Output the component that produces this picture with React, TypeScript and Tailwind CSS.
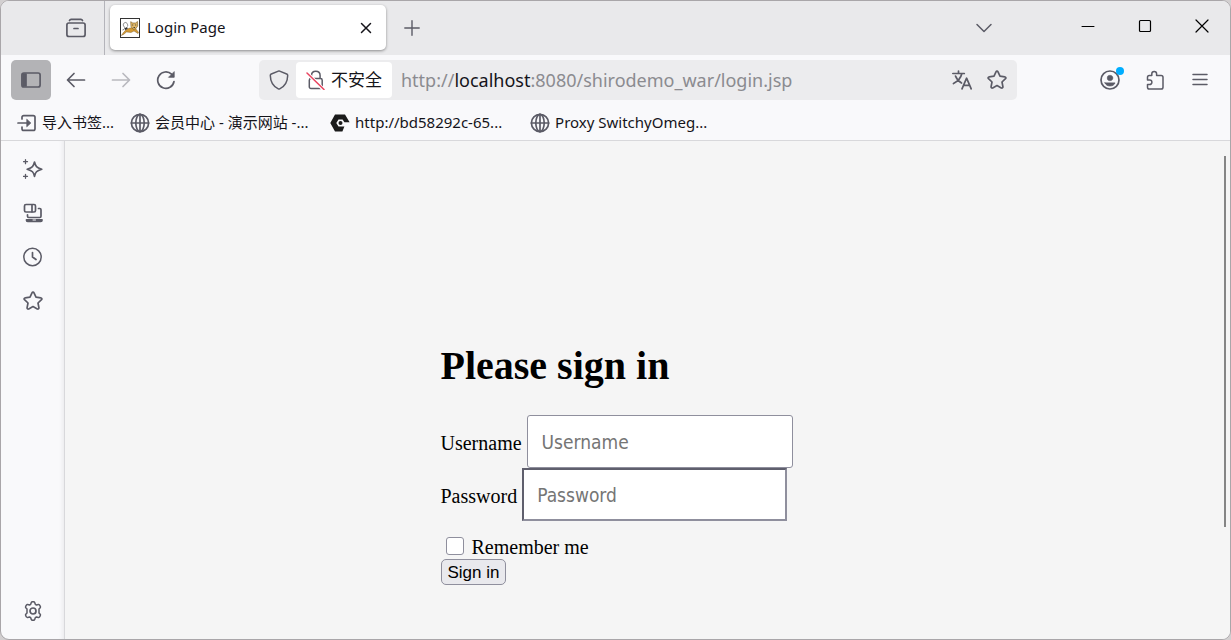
import type { ReactNode } from "react";

type IconProps = { children: ReactNode; color?: string };

function Icon({ children, color = "text-[#5b5b66]" }: IconProps) {
  return (
    <svg
      viewBox="0 0 20 20"
      fill="none"
      stroke="currentColor"
      strokeWidth="1.700"
      strokeLinecap="round"
      strokeLinejoin="round"
      aria-hidden="true"
      className={`size-5 shrink-0 ${color}`}
    >
      {children}
    </svg>
  );
}

const STAR =
  "M10 1.2c.5 0 .8.3 1 .7l2 4.3 4.800.6c1 .1 1.400 1.200.7 1.900l-3.500 3.300.9 4.700c.2 1-.8 1.700-1.600 1.200L10 15.600l-4.300 2.300c-.8.5-1.800-.2-1.600-1.200l.9-4.700L1.500 8.700c-.7-.7-.3-1.800.7-1.900L7 6.200l2-4.300c.2-.4.5-.7 1-.7Z";

function Globe() {
  return (
    <Icon>
      <circle cx="10" cy="10" r="8.600" />
      <ellipse cx="10" cy="10" rx="4.200" ry="8.600" />
      <path d="M1.400 10h17.200M10 1.400v17.200" />
    </Icon>
  );
}

function Star() {
  return (
    <Icon>
      <path d={STAR} />
    </Icon>
  );
}

function CatIcon() {
  return (
    <svg viewBox="0 0 20 20" className="size-5 shrink-0" aria-hidden="true">
      <rect x=".5" y=".5" width="19" height="19" fill="#fff" stroke="#333" />
      <path d="M6.500 4.500C4 4 2.300 6.500 4 8.500c1.500 1.600 1 3-1.500 3.500M6.500 5c1 1 1.500 2 1 3.500" fill="none" stroke="#666" strokeWidth=".8" />
      <path d="M1.300 17.500c1.700-2.500 3.200-5 6.200-6.500 2.500-1.300 5-1.500 8-.5l3.200 4-.7 1-4-2.500-3 1.500-4.500-.5-3 2.500Z" fill="#d39a35" stroke="#6b4d1d" strokeWidth=".4" />
      <path d="M10.700 3.700 12.800 5h2.700l2-1.500.2 4.500-2.200 3-2.500.2-2-2.700Z" fill="#e0b869" stroke="#76571f" strokeWidth=".6" />
      <path d="M12.200 7h1M15.200 7h1M13.500 9.500h1.500" stroke="#333" strokeWidth=".9" />
      <path d="M4.500 10.500 7 9l.8 1.500-2.300 1.700Z" fill="#333" />
    </svg>
  );
}

type BookmarkProps = { icon: ReactNode; label: string; width?: string };

function Bookmark({ icon, label, width = "min-w-[184px]" }: BookmarkProps) {
  return (
    <a href="#" className={`flex items-center gap-[5px] whitespace-nowrap ${width}`}>
      {icon}
      <span>{label}</span>
    </a>
  );
}

function TabStrip() {
  return (
    <div className="flex h-[54px] items-stretch bg-[#e9e9eb] pr-3">
      <div className="flex w-[104px] items-center justify-end border-r border-[#b4b4ba] pr-[18px]">
        <button aria-label="Recent tabs">
          <Icon>
            <rect x="0.900" y="5" width="18.200" height="13.500" rx="2" />
            <path d="M3.500 2.500c.3-.8.800-1.200 1.600-1.200h9.800c.8 0 1.300.4 1.600 1.200M8 10.500h4" />
          </Icon>
        </button>
      </div>
      <div className="mt-1 mb-[5px] ml-[5px] flex w-[276px] items-center rounded-[5px] bg-white px-[10px] text-[15px] text-[#15141a] shadow-[0_1px_3px_rgba(0,0,0,0.4)]">
        <CatIcon />
        <span className="ml-[7px] flex-1">Login Page</span>
        <button aria-label="Close tab">
          <Icon color="text-[#15141a]">
            <path d="m5.500 5.500 9 9m0-9-9 9" strokeWidth="1.500" />
          </Icon>
        </button>
      </div>
      <button aria-label="New tab" className="ml-4">
        <Icon>
          <path d="M10 2.800v14.400M2.800 10h14.400" strokeWidth="1.400" />
        </Icon>
      </button>
      <div className="ml-auto flex items-center">
        <button aria-label="List all tabs" className="mr-[84px]">
          <Icon>
            <path d="m3 6.500 7 7 7-7" strokeWidth="1.500" />
          </Icon>
        </button>
        <div className="flex gap-[37px] pb-1">
          <button aria-label="Minimize">
            <Icon color="text-black">
              <path d="M4 10.500h12" strokeWidth="1" />
            </Icon>
          </button>
          <button aria-label="Maximize">
            <Icon color="text-black">
              <rect x="4.500" y="4.500" width="11" height="11" rx="1" strokeWidth="1.200" />
            </Icon>
          </button>
          <button aria-label="Close window" className="mr-[6px]">
            <Icon color="text-black">
              <path d="m4 4 12 12M16 4 4 16" strokeWidth="1.200" />
            </Icon>
          </button>
        </div>
      </div>
    </div>
  );
}

function Toolbar() {
  return (
    <div className="flex h-[50px] items-center px-[10px]">
      <button aria-label="Toggle sidebar" className="flex size-10 shrink-0 items-center justify-center rounded-[5px] bg-[#b3b3b6]">
        <Icon>
          <rect x=".9" y="3" width="18.200" height="14" rx="2" />
          <path d="M2 4h3v12H2Z" fill="currentColor" />
        </Icon>
      </button>
      <div className="ml-[15px] flex gap-[25px]">
        <button aria-label="Back">
          <Icon>
            <path d="M18.500 10H1.800M8 3.500 1.500 10 8 16.500" />
          </Icon>
        </button>
        <button aria-label="Forward" disabled>
          <Icon color="text-[#b9b9bf]">
            <path d="M1.500 10h16.700M12 3.500l6.500 6.500-6.500 6.500" />
          </Icon>
        </button>
        <button aria-label="Reload">
          <Icon>
            <path d="M18 11.500A8.200 8.200 0 1 1 15.600 4.200" />
            <path d="M18.200 2v5.300h-5.300Z" fill="currentColor" strokeWidth=".8" />
          </Icon>
        </button>
      </div>
      <div className="ml-[83px] flex h-10 w-[758px] min-w-0 items-center rounded-[5px] bg-[#ececee] px-[10px]">
        <button aria-label="Tracking protection">
          <Icon>
            <path d="M10 .9 17.700 4c.7.300 1 .7 1 1.400-.1 6-2.800 10.800-8 13.500-.5.200-.9.200-1.400 0-5.200-2.700-7.900-7.500-8-13.500 0-.7.300-1.100 1-1.400Z" strokeWidth="1.500" />
          </Icon>
        </button>
        <button className="ml-[7px] flex h-9 items-center gap-[5px] rounded-[4px] bg-white px-[10px] text-[17px] whitespace-nowrap text-[#15141a]">
          <Icon>
            <path d="M5.500 8.500h9c1 0 1.700.7 1.700 1.700v6.600c0 1-.7 1.700-1.700 1.700h-9.500c-1 0-1.700-.7-1.700-1.700v-6.600c0-1 .7-1.700 1.700-1.700M5.500 8V5.500C5.500 3 7.300 1.200 9.800 1.200S14.100 3 14.100 5.500V8" strokeWidth="1.500" />
            <path d="m1.500 3.500 16 16" stroke="#fff" strokeWidth="3.500" />
            <path d="m1 3 17 16.500" stroke="#e94560" strokeWidth="1.500" />
          </Icon>
          不安全
        </button>
        <div className="ml-[9px] flex-1 truncate text-[18px] text-[#8b8b90]">
          http://<span className="text-[#15141a]">localhost</span>:8080/shirodemo_war/login.jsp
        </div>
        <button aria-label="Translate page">
          <Icon>
            <path d="M.8 3.500h11.500M6.500 1v2.500M9.800 3.800C8.800 8 5.500 11.500 1.500 13.500M3.500 6c1 3 3 5.300 6 7M10 18.800l4.600-10.600 4.600 10.600M11.500 15.400h6.200" />
          </Icon>
        </button>
        <button aria-label="Bookmark this page" className="ml-[15px]">
          <Star />
        </button>
      </div>
      <div className="ml-auto flex items-center gap-[25px] pr-[10px]">
        <button aria-label="Account" className="relative">
          <Icon>
            <circle cx="10" cy="10" r="9" />
            <circle cx="10" cy="8" r="2.800" fill="currentColor" strokeWidth=".5" />
            <path d="M5 12.900h10c-.8 2-2.500 3-5 3s-4.200-1-5-3Z" fill="currentColor" strokeWidth=".8" />
          </Icon>
          <span className="absolute -top-[3px] -right-1 size-2 rounded-full bg-[#00aeff]" />
        </button>
        <button aria-label="Extensions">
          <Icon>
            <path
              d="M4.300 5.500h2.500V3.800a2.300 2.300 0 0 1 4.800 0v1.700h4.600c1.100 0 1.800.7 1.800 1.800v10c0 1.100-.7 1.800-1.800 1.800H4.300c-1.100 0-1.800-.7-1.800-1.800v-2.800h2.200a2.200 2.200 0 0 0 0-4.400H2.500V7.300c0-1.100.7-1.800 1.800-1.800Z"
              strokeWidth="1.500"
            />
          </Icon>
        </button>
        <button aria-label="Menu">
          <Icon>
            <path d="M3 4.500h14M3 9.500h14M3 14.500h14" strokeWidth="1.500" />
          </Icon>
        </button>
      </div>
    </div>
  );
}

function BookmarksBar() {
  return (
    <nav aria-label="Bookmarks" className="flex h-9 items-center gap-4 border-b border-[#d8d8db] px-4 text-[15px] text-[#15141a]">
      <Bookmark
        label="导入书签..."
        width="min-w-0"
        icon={
          <Icon>
            <path d="M5 6V4.300c0-1 .7-1.700 1.700-1.700h9.600c1 0 1.700.7 1.700 1.700v11.400c0 1-.7 1.700-1.700 1.700H6.700c-1 0-1.700-.7-1.700-1.700V14M1 10h10" />
            <path d="m10 6.500 3.800 3.500-3.800 3.500Z" fill="currentColor" strokeWidth=".8" />
          </Icon>
        }
      />
      <Bookmark label="会员中心 - 演示网站 -..." icon={<Globe />} />
      <Bookmark
        label="http://bd58292c-65..."
        icon={
          <svg viewBox="0 0 20 20" className="size-5 shrink-0" aria-hidden="true">
            <path d="M5 1.500h10l4.600 7.800h-5.200L12.600 6.400H8.500L6.300 10l2.200 3.600h5.900L12.400 18.500H5L.3 10Z" fill="#1b1b1b" />
            <circle cx="10.500" cy="10" r="2" fill="#1b1b1b" />
          </svg>
        }
      />
      <Bookmark label="Proxy SwitchyOmeg..." icon={<Globe />} />
    </nav>
  );
}

function Sidebar() {
  return (
    <aside className="flex w-16 shrink-0 flex-col items-center gap-6 border-r border-[#d8d8db] py-[18px] shadow-[inset_-5px_0_5px_-4px_rgba(0,0,0,0.07)]">
      <button aria-label="AI chatbot">
        <Icon>
          <path d="M11.500 3c1 4.500 2 5.500 7.300 7.200-5.300 1.700-6.300 2.700-7.300 7.200-1-4.500-2-5.500-7.300-7.200 5.300-1.700 6.300-2.700 7.300-7.200Z" />
          <path d="M2.500.7v4M.5 2.700h4M2.500 15.300v4M.5 17.300h4" strokeWidth="1.300" />
        </Icon>
      </button>
      <button aria-label="Synced tabs">
        <Icon>
          <rect x="1.500" y="1.500" width="11" height="7.500" rx="1.500" />
          <path d="M9 1.800v7M15.500 5.500h1.300c.7 0 1.200.5 1.200 1.200v6.600c0 .7-.5 1.200-1.200 1.200H5.700c-.7 0-1.200-.5-1.200-1.200v-1.500" />
          <path d="M3.500 16.800H19v.5c0 .7-.5 1.200-1.200 1.200H4.700c-.7 0-1.200-.5-1.200-1.200Z" fill="currentColor" />
          <path d="M10 17h2.500" stroke="#f9f9fb" strokeWidth="1" />
        </Icon>
      </button>
      <button aria-label="History">
        <Icon>
          <circle cx="9.500" cy="10" r="8.700" strokeWidth="1.500" />
          <path d="M9.500 5.500V10l3.500 2.500" />
        </Icon>
      </button>
      <button aria-label="Bookmarks sidebar">
        <Star />
      </button>
      <button aria-label="Customize sidebar" className="mt-auto">
        <Icon>
          <path
            d="M8.300 1.600c.2-.5.600-.8 1.100-.8h1.200c.5 0 .9.300 1.100.8l.6 1.700 1.200.7 1.800-.4c.5-.1 1 .1 1.300.5l.7 1.200c.3.500.2 1-.1 1.400L16 8v4l1.200 1.300c.3.400.4.900.1 1.400l-.7 1.200c-.3.400-.8.600-1.300.5l-1.800-.4-1.200.7-.6 1.700c-.2.500-.6.800-1.100.8H9.400c-.5 0-.9-.3-1.100-.8l-.6-1.700-1.200-.7-1.800.4c-.5.100-1-.1-1.300-.5l-.7-1.200c-.3-.5-.2-1 .1-1.400L4 12V8L2.800 6.700c-.3-.4-.4-.9-.1-1.400l.7-1.200c.3-.4.8-.6 1.300-.5l1.800.4 1.200-.7Z"
            strokeWidth="1.500"
          />
          <circle cx="10" cy="10" r="3" />
        </Icon>
      </button>
    </aside>
  );
}

function LoginPage() {
  return (
    <main className="flex flex-1 bg-[#f5f5f5] font-['Liberation_Serif',serif] text-xl text-black">
      <form className="mx-auto w-full max-w-[408px] pt-[202px]" onSubmit={(event) => event.preventDefault()}>
        <h1 className="mb-[26px] text-[40px] leading-[46px] font-bold">Please sign in</h1>
        <div className="flex items-center gap-[5px]">
          <label htmlFor="username" className="pt-[2px]">Username</label>
          <input
            id="username"
            type="text"
            placeholder="Username"
            className="h-[53px] w-[266px] rounded-[3px] border border-[#8f8f9d] bg-white px-[14px] font-['DejaVu_Sans_Condensed','DejaVu_Sans',sans-serif] text-[19px] placeholder:text-[#757575]"
          />
        </div>
        <div className="flex items-center gap-[5px]">
          <label htmlFor="password" className="pt-[2px]">Password</label>
          <input
            id="password"
            type="password"
            placeholder="Password"
            className="h-[53px] w-[265px] border-2 border-t-[#5f5f6d] border-r-[#8f8f9d] border-b-[#8f8f9d] border-l-[#5f5f6d] bg-white px-[13px] font-['DejaVu_Sans_Condensed','DejaVu_Sans',sans-serif] text-[19px] placeholder:text-[#757575]"
          />
        </div>
        <div className="mt-3 flex h-[26px] items-center pl-[5px]">
          <input
            id="remember"
            type="checkbox"
            className="size-[18px] appearance-none rounded-[3px] border border-[#8f8f9d] bg-white checked:bg-[#0060df]"
          />
          <label htmlFor="remember" className="ml-2 pt-[2px]">Remember me</label>
        </div>
        <button
          type="submit"
          className="flex h-[26px] items-center rounded-[5px] border border-[#8f8f9d] bg-[#e9e9ed] px-[6px] pt-px font-['Liberation_Sans',sans-serif] text-[17px]"
        >
          Sign in
        </button>
      </form>
      <div className="mt-[15px] mr-1 h-[371px] w-[2px] bg-[#858585]" />
    </main>
  );
}

export default function App() {
  return (
    <div className="flex min-h-screen flex-col bg-[#d2cfd0] font-['Noto_Sans','Noto_Sans_CJK_SC',sans-serif]">
      <div className="flex flex-1 flex-col overflow-hidden rounded-[9px] border border-[#a9a6a9] bg-[#f9f9fb]">
        <TabStrip />
        <Toolbar />
        <BookmarksBar />
        <div className="flex flex-1">
          <Sidebar />
          <LoginPage />
        </div>
      </div>
    </div>
  );
}
